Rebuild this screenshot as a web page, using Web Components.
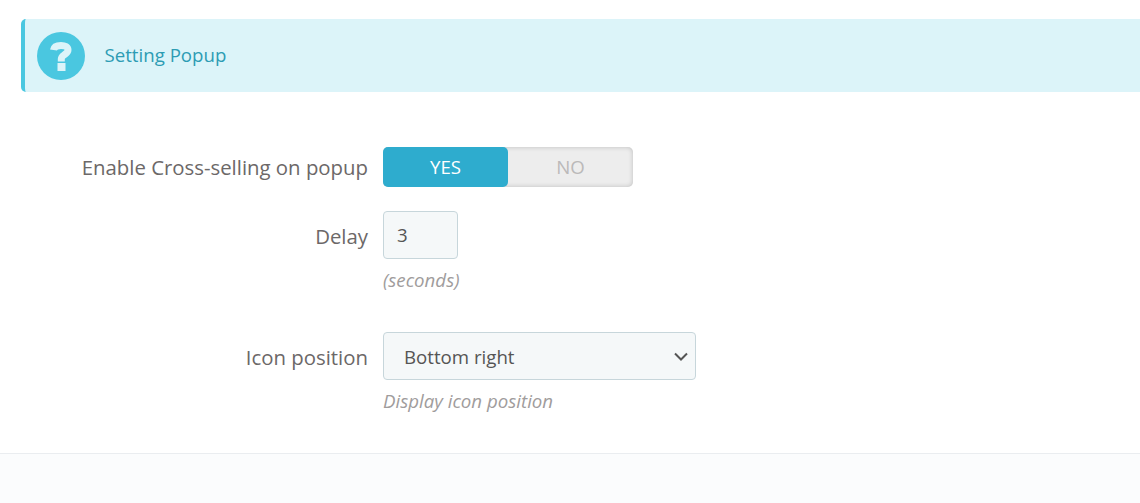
<!DOCTYPE html>
<html>
<head>
<meta charset="utf-8">
<style>
html, body { margin: 0; background: #fff; }
body { font-family: "Open Sans", sans-serif; height: 503px; overflow: hidden; }
</style>
</head>
<body>
<settings-panel>
  <info-banner>Setting Popup</info-banner>
  <form-row label="Enable Cross-selling on popup" style="--row-top:55px;--label-top:8px"><yes-no></yes-no></form-row>
  <form-row label="Delay" style="--row-top:24px;--label-top:13px"><text-box value="3"></text-box><help-text slot="help" style="--help-top:9px">(seconds)</help-text></form-row>
  <form-row label="Icon position" style="--row-top:40px;--label-top:13px"><select-box value="Bottom right"></select-box><help-text slot="help" style="--help-top:9px">Display icon position</help-text></form-row>
</settings-panel>
<script>
class SettingsPanel extends HTMLElement {
  constructor() {
    super();
    this.attachShadow({ mode: 'open' });
    this.shadowRoot.innerHTML = `
      <style>
        :host { display: flex; flex-direction: column; height: 503px; }
        .body { padding: 19px 0 0 21px; height: 453px; box-sizing: border-box; }
        .foot { flex: 1; background: #fbfcfd; border-top: 1px solid #eaedf0; }
      </style>
      <div class="body"><slot></slot></div>
      <div class="foot"></div>
    `;
  }
}
class InfoBanner extends HTMLElement {
  constructor() {
    super();
    this.attachShadow({ mode: 'open' });
    this.shadowRoot.innerHTML = `
      <style>
        :host { display: flex; align-items: center; height: 73px; box-sizing: border-box;
          background: #dcf4f9; border-left: 4px solid #4ac7e0; border-radius: 5px 0 0 5px;
          color: #2d9cb4; font-size: 18.67px; padding-left: 12px; }
        svg { display: block; margin-right: 19.5px; }
        span { margin-top: -2px; }
      </style>
      <svg width="48" height="48" viewBox="0 0 48 48">
        <circle cx="24" cy="24" r="24" fill="#4ac7e0"/>
        <path d="M16.500 18C17 15 19.500 13.500 24 13.500C28 13.500 31 15 31 18C31 20.500 29 21.500 27 23C25.300 24.200 24.300 25 24.300 27V29.500" fill="none" stroke="#dcf4f9" stroke-width="7"/>
        <rect x="20.500" y="31" width="8" height="8" fill="#dcf4f9"/>
      </svg>
      <span><slot></slot></span>
    `;
  }
}
class FormRow extends HTMLElement {
  constructor() {
    super();
    this.attachShadow({ mode: 'open' });
    this.shadowRoot.innerHTML = `
      <style>
        :host { display: grid; grid-template-columns: 347px auto; column-gap: 15px;
          margin-top: var(--row-top, 0); color: #6c6868; line-height: 24px; }
        .label { text-align: right; padding-top: var(--label-top, 0); white-space: nowrap; font-size: 20.37px; }
      </style>
      <div class="label"></div>
      <div><slot></slot><slot name="help"></slot></div>
    `;
    this.shadowRoot.querySelector('.label').textContent = this.getAttribute('label');
  }
}
class YesNo extends HTMLElement {
  constructor() {
    super();
    this.attachShadow({ mode: 'open' });
    this.shadowRoot.innerHTML = `
      <style>
        :host { display: flex; width: 250px; height: 40px; border-radius: 5px;
          background: #ededed; box-shadow: inset 0 0 5px rgba(0,0,0,.2);
          font-size: 18.67px; line-height: 40px; text-align: center; }
        div { flex: 1; }
        .on { background: #2eacce; color: #fff; border-radius: 5px; }
        .off { color: #bbb9b9; }
      </style>
      <div class="on">YES</div>
      <div class="off">NO</div>
    `;
  }
}
class TextBox extends HTMLElement {
  constructor() {
    super();
    this.attachShadow({ mode: 'open' });
    this.shadowRoot.innerHTML = `
      <style>
        :host { display: block; width: 75px; height: 48px; box-sizing: border-box;
          background: #f5f8f9; border: 1px solid #c7d6db; border-radius: 4px;
          color: #555; font-size: 18.67px; line-height: 46px; padding-left: 13px; }
      </style>
      <span></span>
    `;
    this.shadowRoot.querySelector('span').textContent = this.getAttribute('value');
  }
}
class SelectBox extends HTMLElement {
  constructor() {
    super();
    this.attachShadow({ mode: 'open' });
    this.shadowRoot.innerHTML = `
      <style>
        :host { display: flex; align-items: center; justify-content: space-between;
          width: 313px; height: 48px; box-sizing: border-box;
          background: #f5f8f9; border: 1px solid #c7d6db; border-radius: 4px;
          color: #555; font-size: 18.67px; padding: 1px 7px 0 20px; }
        svg { display: block; margin-top: -1px; }
      </style>
      <span></span>
      <svg width="14" height="9" viewBox="0 0 14 9"><path d="M1 1.500l6 6 6-6" fill="none" stroke="#555" stroke-width="2"/></svg>
    `;
    this.shadowRoot.querySelector('span').textContent = this.getAttribute('value');
  }
}
class HelpText extends HTMLElement {
  constructor() {
    super();
    this.attachShadow({ mode: 'open' });
    this.shadowRoot.innerHTML = `
      <style>
        :host { display: block; margin-top: var(--help-top, 0); color: #a09c9c;
          font-size: 18.67px; font-style: italic; line-height: 24px; }
      </style>
      <slot></slot>
    `;
  }
}
customElements.define('settings-panel', SettingsPanel);
customElements.define('info-banner', InfoBanner);
customElements.define('form-row', FormRow);
customElements.define('yes-no', YesNo);
customElements.define('text-box', TextBox);
customElements.define('select-box', SelectBox);
customElements.define('help-text', HelpText);
</script>
</body>
</html>
